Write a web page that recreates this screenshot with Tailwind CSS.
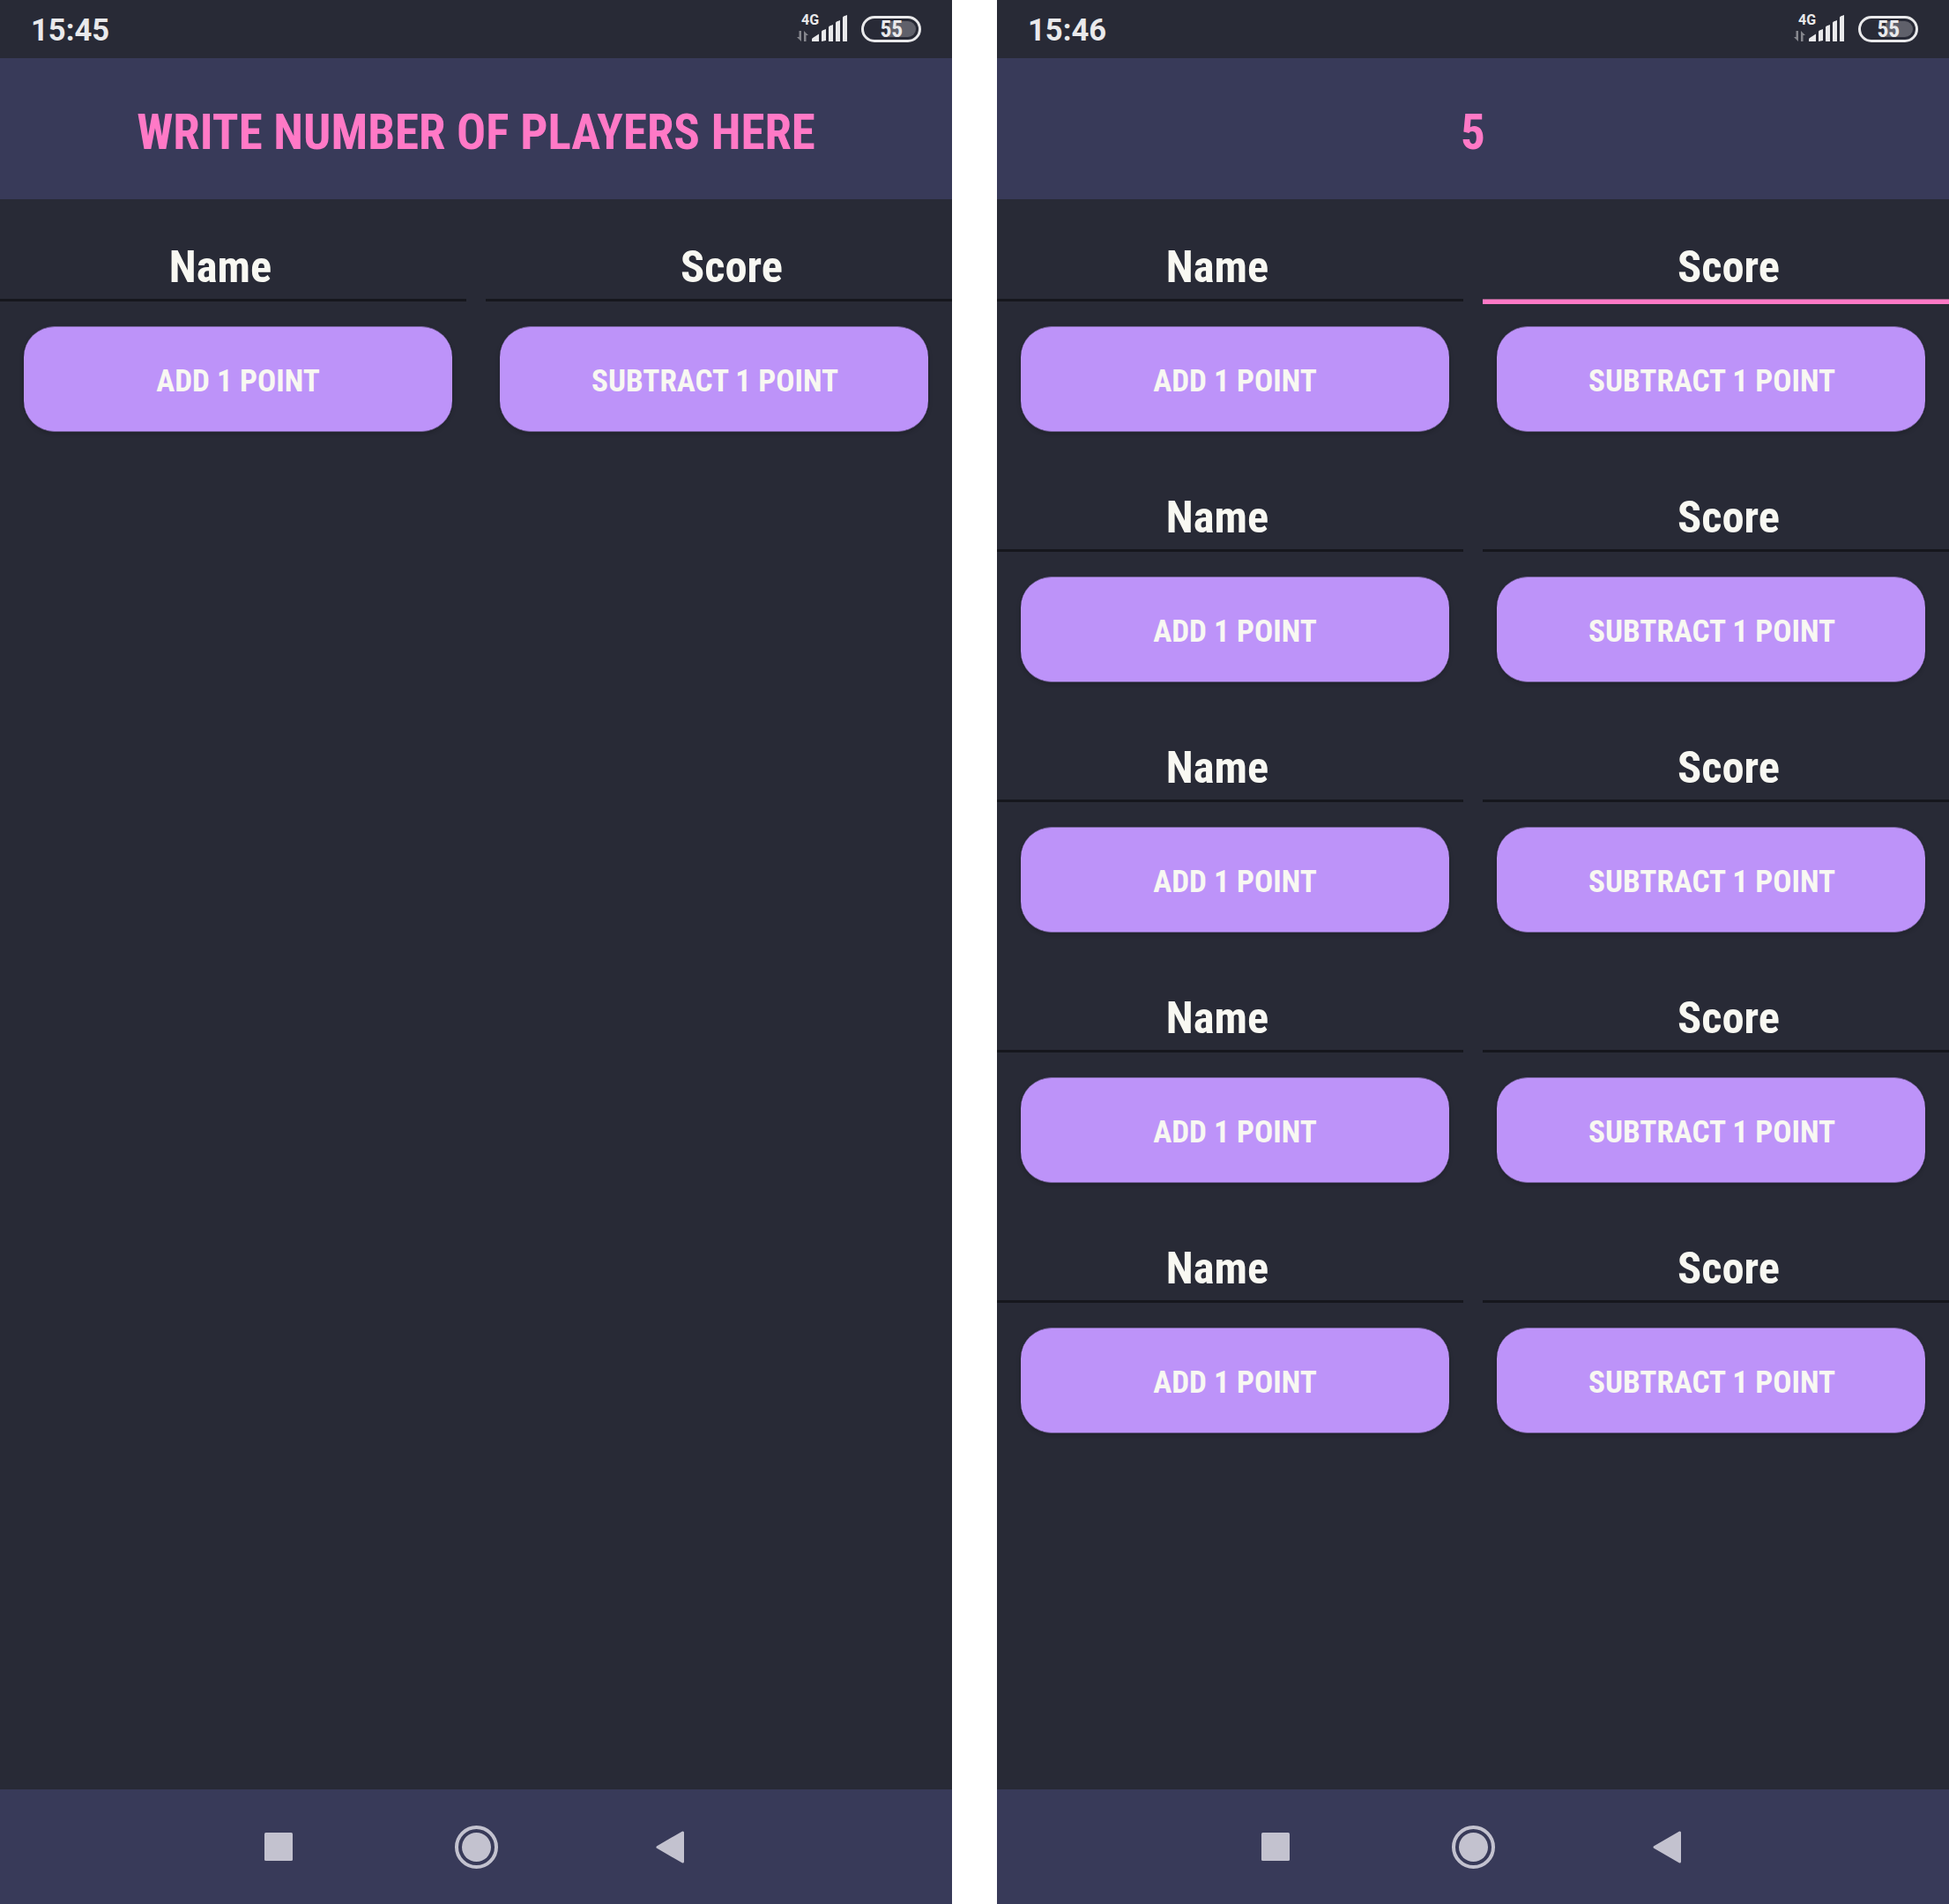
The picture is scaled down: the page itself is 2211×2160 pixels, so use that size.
<!DOCTYPE html>
<html lang="en">
<head>
<meta charset="utf-8">
<title>Score keeper</title>
<script src="https://cdn.jsdelivr.net/npm/@tailwindcss/browser@4"></script>
</head>
<body class="bg-white font-['Roboto',sans-serif]">
<div class="flex gap-[51px]">

  <main class="flex h-[2160px] w-[1080px] flex-col overflow-hidden bg-[#282a36]">
    <div class="flex h-[66px] items-center justify-between pl-[35px] pr-[35px] text-[#e9e9eb]">
      <span class="pt-[3px] text-[34.6px] leading-none font-bold">15:45</span>
      <svg class="h-[66px] w-[144px] shrink-0" viewBox="901 0 144 66" fill="#e9e9eb">
        <text x="909" y="28" font-size="16" font-weight="700">4G</text>
        <path d="M909 35v12l-5-5h2.500v-7zM912 47V35l5 5h-2.500v7z" fill="#85868d"/>
        <path d="M921 47v-2.500q0-1 1-1.600l7-4.400V47zM932 47V36q0-1 1-1.500l4-1.500v13zM940 47V31q0-1 1-1.500l4-1.500v19zM948 47V26q0-1 1-1.500l4-1.500v24zM956 47V20q0-1 1-1.500l4-1.500v30z"/>
        <rect x="978.500" y="19.500" width="65" height="27" rx="13.500" fill="none" stroke="#e9e9eb" stroke-width="3"/>
        <path d="M1008 24h22a9 9 0 0 1 0 18h-22z" fill="#5f606a"/>
        <text class="[font-stretch:85%]" x="1011.300" y="42.300" font-size="25.500" font-weight="700" text-anchor="middle">55</text>
      </svg>
    </div>
    <header class="flex h-[160px] items-center justify-center bg-[#383a59] pt-[8px] text-[55px] leading-none font-bold text-[#ff79c6] [font-stretch:75%]">WRITE NUMBER OF PLAYERS HERE</header>
    <div id="single" class="flex-1"></div>
    <nav class="h-[130px] bg-[#383a59]">
      <svg class="h-full w-full" viewBox="0 0 1080 130" fill="#c3c2cf">
        <rect x="300" y="49" width="32" height="32" rx="1.500"/>
        <circle cx="540.500" cy="65.500" r="22.500" fill="none" stroke="#c3c2cf" stroke-width="4"/>
        <circle cx="540.500" cy="65.500" r="16.500"/>
        <path d="M746 65.500L774.500 49v33z" stroke="#c3c2cf" stroke-width="3" stroke-linejoin="round"/>
      </svg>
    </nav>
  </main>

  <main class="flex h-[2160px] w-[1080px] flex-col overflow-hidden bg-[#282a36]">
    <div class="flex h-[66px] items-center justify-between pl-[35px] pr-[35px] text-[#e9e9eb]">
      <span class="pt-[3px] text-[34.6px] leading-none font-bold">15:46</span>
      <svg class="h-[66px] w-[144px] shrink-0" viewBox="901 0 144 66" fill="#e9e9eb">
        <text x="909" y="28" font-size="16" font-weight="700">4G</text>
        <path d="M909 35v12l-5-5h2.500v-7zM912 47V35l5 5h-2.500v7z" fill="#85868d"/>
        <path d="M921 47v-2.500q0-1 1-1.600l7-4.400V47zM932 47V36q0-1 1-1.500l4-1.500v13zM940 47V31q0-1 1-1.500l4-1.500v19zM948 47V26q0-1 1-1.500l4-1.500v24zM956 47V20q0-1 1-1.500l4-1.500v30z"/>
        <rect x="978.500" y="19.500" width="65" height="27" rx="13.500" fill="none" stroke="#e9e9eb" stroke-width="3"/>
        <path d="M1008 24h22a9 9 0 0 1 0 18h-22z" fill="#5f606a"/>
        <text class="[font-stretch:85%]" x="1011.300" y="42.300" font-size="25.500" font-weight="700" text-anchor="middle">55</text>
      </svg>
    </div>
    <header class="flex h-[160px] items-center justify-center bg-[#383a59] pt-[8px] text-[55px] leading-none font-bold text-[#ff79c6] [font-stretch:75%]">5</header>
    <div id="players" class="flex-1"></div>
    <nav class="h-[130px] bg-[#383a59]">
      <svg class="h-full w-full" viewBox="0 0 1080 130" fill="#c3c2cf">
        <rect x="300" y="49" width="32" height="32" rx="1.500"/>
        <circle cx="540.500" cy="65.500" r="22.500" fill="none" stroke="#c3c2cf" stroke-width="4"/>
        <circle cx="540.500" cy="65.500" r="16.500"/>
        <path d="M746 65.500L774.500 49v33z" stroke="#c3c2cf" stroke-width="3" stroke-linejoin="round"/>
      </svg>
    </nav>
  </main>
</div>

<template id="row">
  <section class="h-[284px] font-bold text-[#f8f8f2] [font-stretch:75%]">
    <div class="flex h-[144px] justify-between">
      <div class="h-[116px] w-[529px] border-b-3 border-[#16171d] pt-[51px] pr-[29px] text-center text-[50.5px] leading-[52px]">Name</div>
      <div data-score class="h-[116px] w-[529px] border-b-3 border-[#16171d] pt-[51px] pl-[29px] text-center text-[50.5px] leading-[52px]">Score</div>
    </div>
    <div class="flex justify-between px-[27px]">
      <button class="h-[120px] w-[486px] rounded-[35px] border-y border-[#735f98] bg-[#bd93f9] pt-[4px] text-[35.2px] shadow-[0_2px_5px_rgba(0,0,0,0.2)]">ADD 1 POINT</button>
      <button class="h-[120px] w-[486px] rounded-[35px] border-y border-[#735f98] bg-[#bd93f9] pt-[4px] pl-[2px] text-[35.2px] shadow-[0_2px_5px_rgba(0,0,0,0.2)]">SUBTRACT 1 POINT</button>
    </div>
  </section>
</template>
<script>
  const row = document.getElementById('row');
  document.getElementById('single').append(row.content.cloneNode(true));
  const players = document.getElementById('players');
  for (let i = 0; i < 5; i++) players.append(row.content.cloneNode(true));
  // The first score field has the focus
  const focused = players.querySelector('[data-score]');
  focused.className = 'h-[119px] w-[529px] border-b-5 border-[#ff79c6] pt-[51px] pl-[29px] text-center text-[50.5px] leading-[52px] shadow-[inset_0_-1px_0_#985a82]';
</script>
</body>
</html>
